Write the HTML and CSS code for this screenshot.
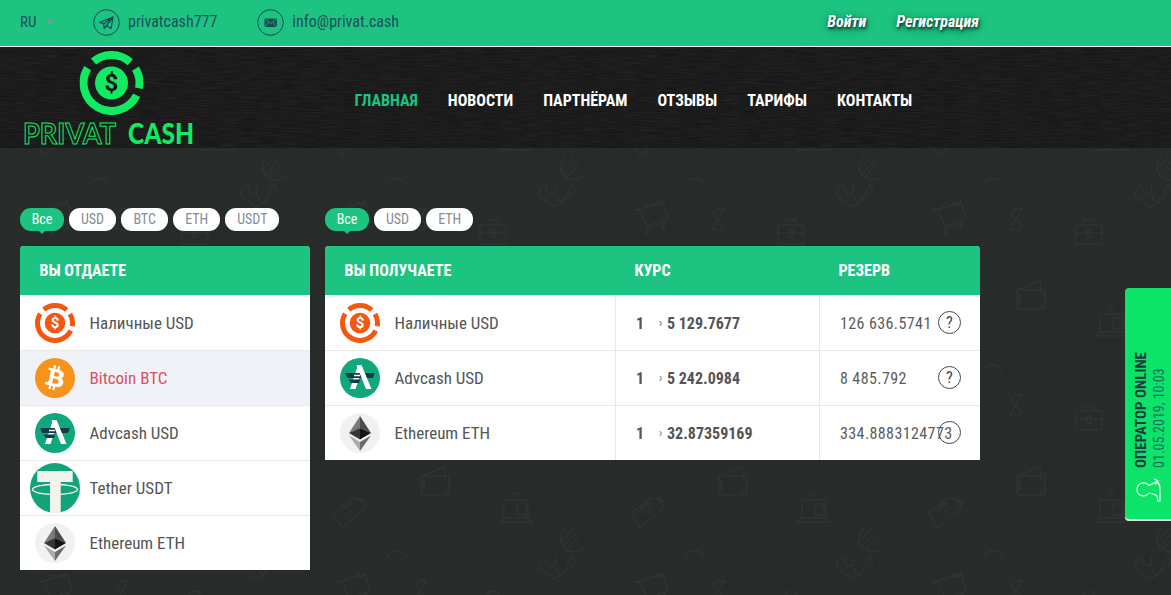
FILE: index.html
```html
<!DOCTYPE html>
<html lang="ru">
<head>
<meta charset="utf-8">
<title>Privat Cash</title>
<link rel="stylesheet" href="styles.css">
</head>
<body>
<svg class="defs" width="0" height="0" aria-hidden="true">
  <symbol id="coin" viewBox="-32 -32 64 64">
    <g fill="none" stroke="currentColor" stroke-width="8">
      <path d="M-18-21.45A28 28 0 0 1 18.74-20.81"/>
      <path d="M24-14.42A28 28 0 0 1 27.49 5.34"/>
      <path d="M25.17 12.27A28 28 0 1 1-23.75-14.84"/>
    </g>
    <circle r="16.5" fill="currentColor"/>
  </symbol>
  <symbol id="btc" viewBox="0 0 64 64">
    <circle cx="32" cy="32" r="32" fill="#f7931a"/>
    <path fill="#fff" d="M46.11 27.441c.636-4.258-2.606-6.547-7.039-8.074l1.438-5.768-3.512-.875-1.4 5.616c-.922-.23-1.87-.447-2.812-.662l1.41-5.653-3.509-.875-1.439 5.766c-.764-.174-1.514-.346-2.242-.527l.004-.018-4.842-1.209-.934 3.75s2.605.597 2.55.634c1.422.355 1.68 1.296 1.636 2.042l-1.638 6.571c.098.025.225.061.365.117l-.37-.092-2.297 9.205c-.174.432-.615 1.08-1.609.834.035.051-2.552-.637-2.552-.637l-1.743 4.02 4.57 1.139c.85.213 1.683.436 2.502.646l-1.453 5.835 3.507.875 1.44-5.772c.957.26 1.887.5 2.797.726L27.504 50.8l3.511.875 1.453-5.823c5.987 1.133 10.49.676 12.383-4.738 1.527-4.36-.075-6.875-3.225-8.516 2.294-.531 4.022-2.04 4.483-5.157zM38.087 38.69c-1.086 4.36-8.426 2.004-10.807 1.412l1.928-7.729c2.38.594 10.011 1.77 8.88 6.317zm1.085-11.312c-.99 3.966-7.1 1.951-9.083 1.457l1.748-7.01c1.983.494 8.367 1.416 7.335 5.553z"/>
  </symbol>
  <symbol id="adv" viewBox="0 0 40 40">
    <circle cx="20" cy="20" r="20" fill="#0fa77b"/>
    <path fill="#fff" d="M18 7 10 31h5.500l7-21z"/>
    <path fill="#123b4a" d="M5 15h30l-2.200 5H7.200zM8.500 21.500H20l-1 3.500h-8z"/>
    <path fill="#fff" d="M16.500 7h5L31.500 31H26zM14 16.800h6v1.400h-6z"/>
  </symbol>
  <symbol id="usdt" viewBox="0 0 50 50">
    <circle cx="25" cy="25" r="25" fill="#13a37b"/>
    <path fill="#f3f3ee" d="M7.300 8h35.400v11H30.700v31H20V19H7.300z"/>
    <ellipse cx="25" cy="26.500" rx="22.500" ry="5" fill="none" stroke="#f3f3ee" stroke-width="1.300"/>
  </symbol>
  <symbol id="eth" viewBox="0 0 40 40">
    <circle cx="20" cy="20" r="20" fill="#f0f1f1"/>
    <path fill="#7a7a7a" d="M20 3 9 20l11-5z"/>
    <path fill="#4c4c4c" d="M20 3l11 17-11-5z"/>
    <path fill="#363636" d="M9 20l11 6.500V15z"/>
    <path fill="#151515" d="M31 20l-11 6.500V15z"/>
    <path fill="#aaa" d="M9 22.500 20 38v-9z"/>
    <path fill="#6c6c6c" d="M31 22.500 20 38v-9z"/>
  </symbol>
</svg>

<div class="topbar">
  <div class="topbar-left">
    <span class="lang">RU<i class="caret"></i></span>
    <a class="contact">
      <svg class="contact-icon" viewBox="0 0 27 27"><circle cx="13.500" cy="13.500" r="12.800" fill="none" stroke="#1b4a55" stroke-width="1"/><path fill="none" stroke="#1b4a55" stroke-width="1.300" stroke-linejoin="round" d="M6.500 13.500 20 8l-2 11.500-4.500-3-2.200 3-.6-4.800zM10.700 14.700 20 8l-6.500 8.500"/></svg>
      <span>privatcash777</span>
    </a>
    <a class="contact">
      <svg class="contact-icon" viewBox="0 0 27 27"><circle cx="13.500" cy="13.500" r="12.800" fill="none" stroke="#1b4a55" stroke-width="1"/><rect x="7.500" y="9.500" width="12.500" height="8.500" fill="#1b4a55"/><path fill="none" stroke="#1dc481" stroke-width=".7" d="M7.500 9.500l6.250 5 6.250-5M7.500 18l4.300-5M20 18l-4.300-5"/></svg>
      <span>info@privat.cash</span>
    </a>
  </div>
  <div class="auth"><a>Войти</a><a>Регистрация</a></div>
</div>

<header class="header">
  <svg class="logo" viewBox="0 0 176 98" role="img" aria-label="Privat Cash">
    <use href="#coin" x="57.500" y="1" width="64" height="64" class="logo-coin"/>
    <text class="coin-sign sign-dark" x="89.500" y="41" text-anchor="middle">$</text>
    <text class="logo-outline" x="1" y="94" textLength="93" lengthAdjust="spacingAndGlyphs">PRIVAT</text>
    <text class="logo-solid" x="106" y="94" textLength="66" lengthAdjust="spacingAndGlyphs">CASH</text>
  </svg>
  <nav class="nav">
    <a class="active">Главная</a><a>Новости</a><a>Партнёрам</a><a>Отзывы</a><a>Тарифы</a><a>Контакты</a>
  </nav>
</header>

<main class="main">
  <section class="col-give">
    <div class="tabs"><a class="tab on">Все</a><a class="tab">USD</a><a class="tab">BTC</a><a class="tab">ETH</a><a class="tab">USDT</a></div>
    <div class="panel">
      <div class="panel-head">Вы отдаете</div>
      <div class="give-row"><span class="ico"><svg class="i40 coin-orange" viewBox="-32 -32 64 64"><use href="#coin" x="-32" y="-32" width="64" height="64"/><text class="coin-sign" y="8" text-anchor="middle">$</text></svg></span><span>Наличные USD</span></div>
      <div class="give-row selected"><span class="ico"><svg class="i40"><use href="#btc"/></svg></span><span>Bitcoin BTC</span></div>
      <div class="give-row"><span class="ico"><svg class="i40"><use href="#adv"/></svg></span><span>Advcash USD</span></div>
      <div class="give-row"><span class="ico"><svg class="i50"><use href="#usdt"/></svg></span><span>Tether USDT</span></div>
      <div class="give-row"><span class="ico"><svg class="i40"><use href="#eth"/></svg></span><span>Ethereum ETH</span></div>
    </div>
  </section>

  <section class="col-get">
    <div class="tabs"><a class="tab on">Все</a><a class="tab">USD</a><a class="tab">ETH</a></div>
    <div class="panel">
      <div class="get-grid panel-head"><span>Вы получаете</span><span class="pad-h">Курс</span><span class="pad-h">Резерв</span></div>
      <div class="get-grid get-row">
        <div class="cell-name"><span class="ico"><svg class="i40 coin-orange" viewBox="-32 -32 64 64"><use href="#coin" x="-32" y="-32" width="64" height="64"/><text class="coin-sign" y="8" text-anchor="middle">$</text></svg></span><span>Наличные USD</span></div>
        <div class="cell-rate"><b class="one">1</b><i class="arr">›</i><b>5 129.7677</b></div>
        <div class="cell-res"><span>126 636.5741</span><span class="q">?</span></div>
      </div>
      <div class="get-grid get-row">
        <div class="cell-name"><span class="ico"><svg class="i40"><use href="#adv"/></svg></span><span>Advcash USD</span></div>
        <div class="cell-rate"><b class="one">1</b><i class="arr">›</i><b>5 242.0984</b></div>
        <div class="cell-res"><span>8 485.792</span><span class="q">?</span></div>
      </div>
      <div class="get-grid get-row">
        <div class="cell-name"><span class="ico"><svg class="i40"><use href="#eth"/></svg></span><span>Ethereum ETH</span></div>
        <div class="cell-rate"><b class="one">1</b><i class="arr">›</i><b>32.87359169</b></div>
        <div class="cell-res"><span>334.8883124773</span><span class="q"></span></div>
      </div>
    </div>
  </section>
</main>

<aside class="operator">
  <div class="op-text"><b>Оператор online</b><span>01.05.2019, 10:03</span></div>
  <svg class="op-icon" viewBox="0 0 25 24"><g fill="none" stroke="#fff" stroke-width="1.200" stroke-linejoin="round" stroke-linecap="round"><path d="M13 7.500C11.500 5.500 9.500 4.500 7 4.800 3.500 5.200 1 8 1 11.500S3.500 17.500 7 17.800c2.500.2 4.500-.8 6-2.800l4 1c2 .5 4.500 1.500 4.500 3.500v3.500h2.500V11c0-3-1-5.500-2.500-7"/><path d="M13 7.500 22 3M18.500 1 22 3l-2.500 3"/></g></svg>
</aside>
</body>
</html>
```
FILE: styles.css
```css
* { box-sizing: border-box; }
html, body { margin: 0; height: 100%; }
body {
  display: flex;
  flex-direction: column;
  overflow: hidden;
  font-family: "Roboto", "Liberation Sans", sans-serif;
  font-stretch: 75%;
  font-size: 16px;
  color: #555;
  background: #272b2a;
}
a { text-decoration: none; color: inherit; }
.defs { position: absolute; }

.topbar {
  flex: none;
  height: 47px;
  width: 100%;
  padding: 0 192px 1px 20px;
  display: flex;
  justify-content: space-between;
  align-items: center;
  background: #1dc481;
  border-bottom: 1px solid #fff;
}
.topbar-left { display: flex; align-items: center; color: #1f4f5a; }
.lang { width: 73px; display: flex; align-items: center; font-size: 15px; margin-bottom: 2px; }
.caret {
  margin: 2px 0 0 10px;
  border: 4px solid transparent;
  border-top: 5px solid #5aa79e;
  border-bottom: 0;
}
.contact { display: flex; align-items: center; gap: 8px; margin-right: 40px; font-size: 16px; }
.contact span { margin-bottom: 2px; }
.contact-icon { width: 27px; height: 27px; }
.auth { display: flex; gap: 30px; margin-bottom: 2px; font-weight: 700; font-style: italic; color: #fff; font-size: 16px; text-shadow: 1px 2px 3px #063b33, 0 2px 8px rgba(0,40,30,.6); }

.header {
  flex: none;
  height: 101px;
  padding: 3px 0 0 22px;
  display: flex;
  align-items: flex-start;
  background-color: #161616;
  background-image: url("data:image/svg+xml,%3Csvg xmlns='http://www.w3.org/2000/svg' width='600' height='101'%3E%3Cfilter id='n'%3E%3CfeTurbulence type='fractalNoise' baseFrequency='.05 .9' numOctaves='2' seed='4'/%3E%3CfeColorMatrix values='0 0 0 0 1 0 0 0 0 1 0 0 0 0 1 .09 0 0 0 -.02'/%3E%3C/filter%3E%3Crect width='600' height='101' filter='url(%23n)'/%3E%3C/svg%3E");
}
.logo { width: 176px; height: 98px; flex: none; overflow: visible; }
.logo-coin { color: #12ea64; }
.coin-sign { font: 700 24px "Roboto", sans-serif; fill: #fff; }
.sign-dark { fill: #111; }
.logo-outline, .logo-solid { font-family: "Lato", sans-serif; font-size: 28px; font-weight: 700; }
.logo-outline { fill: none; stroke: #12ea64; stroke-width: 1; }
.logo-solid { fill: #12ea64; font-weight: 900; }
.nav {
  margin: 41px 0 0 156.500px;
  display: flex;
  gap: 30px;
  font-weight: 700;
  font-size: 16px;
  line-height: 19px;
  color: #fff;
  text-transform: uppercase;
}
.nav .active { color: #1dc481; }

.main {
  flex: 1;
  padding: 60px 0 0 20px;
  display: flex;
  align-items: flex-start;
  gap: 15px;
  background-color: #272b2a;
  background-image: url("data:image/svg+xml,%3Csvg xmlns='http://www.w3.org/2000/svg' width='298' height='186' fill='none' stroke='%23313635' stroke-width='1'%3E%3Cpath d='M89 38a10.500 10.500 0 0 1 20 0'/%3E%3Cpath d='M129 62c-7-4-12 0-11 5s10 6 9 11-6 5-11 2M128 60l-12 22'/%3E%3Cpath d='M182 77h26v19h-26zM190 77v-5h10v5M182 85h26M193 82h4v7h-4z'/%3E%3Cpath d='M124 142l22-9 1 9M123 142h28v19h-28zM123 145a8 8 0 0 1 0 13M151 147a5 5 0 0 1-5-5M146 161a5 5 0 0 1 5-5M127 148c-2-1-3 1-2 3s3 2 2 4'/%3E%3Cg id='l'%3E%3Cpath d='M206 184v-18h24v18M201 188l5-4h24l5 4zM219 170h9v11h-9zM214 160a5 5 0 0 1 7 0M216 162h3'/%3E%3C/g%3E%3Cuse href='%23l' y='-186'/%3E%3Cg id='t'%3E%3Cpath d='M35 179l19-15 15 4-4 8-21 18zM44 174l9-7M42 178l13-10M47 181l9-7M60 165a3 3 0 1 1 3 5'/%3E%3C/g%3E%3Cuse href='%23t' y='-186'/%3E%3Cpath d='M268 8a13 13 0 1 0 17 21M261 24l15-16M264 28l14-15M267 31l14-15'/%3E%3Cpath d='M246 37c-4 3-6 7-5 11l15 11 9-5 12-12-3-6-3 5c-2 3 0 5-2 6l-7 9M248 37c-1 5 2 9 8 9 2-3 2-6 1-9M259 48a5 5 0 0 0 3 6'/%3E%3Cpath d='M39 62h5l7 16 21-7-5-17-18 6zM47 60l5-5 4 3 5-4 3 4 3-6M50 81l20-7M52 81a2.500 2.500 0 1 0 .1 5zM68 76a2.500 2.500 0 1 0 .1 5z'/%3E%3C/svg%3E");
}
.col-give { width: 290px; flex: none; }
.col-get { width: 655px; flex: none; }
.tabs { height: 23px; margin-bottom: 15px; display: flex; gap: 5px; }
.tab {
  position: relative;
  height: 23px;
  padding: 0 12px 1px;
  min-width: 47px;
  display: flex;
  align-items: center;
  justify-content: center;
  border-radius: 11px;
  background: #fff;
  color: #868b96;
  font-size: 14px;
}
.tab.on { background: #1dc481; color: #fff; width: 44px; min-width: 0; }
.tab.on::after {
  content: "";
  position: absolute;
  left: 50%;
  top: 22px;
  margin-left: -4px;
  border: 4px solid transparent;
  border-top-color: #1dc481;
  border-bottom: 0;
}

.panel { background: #fff; border-radius: 4px 4px 0 0; overflow: hidden; }
.panel-head {
  height: 49px;
  margin-bottom: 1px;
  padding-left: 19.500px;
  display: flex;
  align-items: center;
  background: #1dc481;
  color: #fff;
  font-weight: 700;
  font-size: 16px;
  text-transform: uppercase;
}
.give-row, .cell-name { display: flex; align-items: center; font-size: 17px; color: #555; }
.give-row { height: 55px; border-bottom: 1px solid #e8e9ea; }
.give-row:last-child { border-bottom: 0; height: 54px; }
.give-row.selected { background: #f0f2f7; color: #d9505f; }
.ico { width: 69.500px; flex: none; display: flex; justify-content: center; }
.i40 { width: 40px; height: 40px; }
.i50 { width: 50px; height: 50px; }
.coin-orange { color: #f4570f; }

.get-grid { display: grid; grid-template-columns: 290px 204px 161px; }
.panel-head.get-grid { display: grid; align-items: center; padding: 0; }
.panel-head.get-grid > span:first-child { padding-left: 19.500px; }
.pad-h { padding-left: 19.500px; }
.get-row { height: 55px; border-bottom: 1px solid #e8e9ea; }
.get-row:last-child { border-bottom: 0; height: 54px; }
.cell-rate, .cell-res {
  display: flex;
  align-items: center;
  border-left: 1px solid #e8e9ea;
  padding-left: 20px;
}
.cell-rate { font-size: 16px; color: #555; }
.one { width: 23px; }
.arr { width: 8px; font-style: normal; font-size: 12px; color: #666; }
.cell-res { position: relative; font-size: 16px; letter-spacing: .4px; color: #5c5c5c; white-space: nowrap; }
.q {
  position: absolute;
  left: 118px;
  top: 50%;
  width: 23px;
  height: 23px;
  margin-top: -12px;
  border: 1px solid #3f4852;
  border-radius: 50%;
  display: flex;
  align-items: center;
  justify-content: center;
  font-size: 16px;
  letter-spacing: 0;
  color: #444;
}

.operator {
  position: absolute;
  right: 0;
  top: 288px;
  width: 46px;
  height: 231px;
  padding: 64px 0 17px;
  background: #0be369;
  border-radius: 4px 0 0 4px;
  box-shadow: 0 2px 0 #e8e8e8;
  display: flex;
  flex-direction: column;
  align-items: center;
  justify-content: space-between;
}
.op-text {
  writing-mode: vertical-rl;
  transform: rotate(180deg);
  display: flex;
  flex-direction: column;
  align-items: flex-start;
  line-height: 18px;
  font-size: 15px;
  white-space: nowrap;
  margin-left: 4px;
}
.op-text b { color: #163d3f; text-transform: uppercase; }
.op-text span { color: #1e6f5b; font-size: 14px; }
.op-icon { width: 25px; height: 24px; }
```
